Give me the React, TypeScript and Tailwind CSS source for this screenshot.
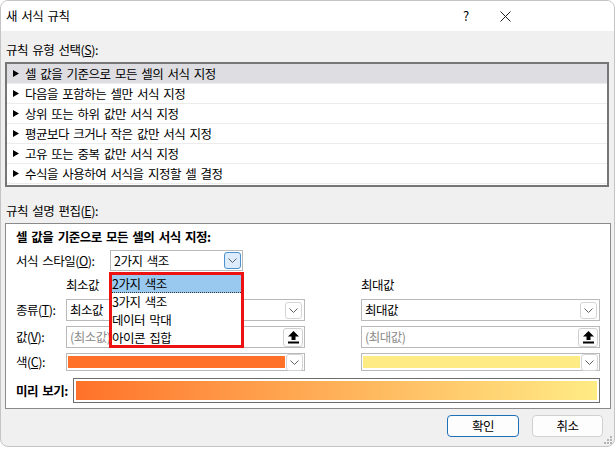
import React from 'react';

const rules = [
  '셀 값을 기준으로 모든 셀의 서식 지정',
  '다음을 포함하는 셀만 서식 지정',
  '상위 또는 하위 값만 서식 지정',
  '평균보다 크거나 작은 값만 서식 지정',
  '고유 또는 중복 값만 서식 지정',
  '수식을 사용하여 서식을 지정할 셀 결정',
];

const styles = ['2가지 색조', '3가지 색조', '데이터 막대', '아이콘 집합'];

const Chevron = () => (
  <svg width="9" height="5" viewBox="0 0 9 5" fill="none">
    <path d="M0.5 0.5 L4.5 4.5 L8.5 0.5" stroke="#606060" strokeWidth="1" />
  </svg>
);

const DropBtn = ({ active }: { active?: boolean }) => (
  <div
    className={`w-[17px] h-[17px] flex items-center justify-center rounded-[3px] border ${
      active ? 'border-[#4a90cf] bg-[#dcecfc]' : 'border-[#d4d4d4] bg-white'
    }`}
  >
    <Chevron />
  </div>
);

const UpArrow = () => (
  <svg width="11" height="13" viewBox="0 0 11 13">
    <polygon points="5.5,0 11,5.5 7.5,5.5 7.5,9 3.5,9 3.5,5.5 0,5.5" fill="#000" />
    <rect x="0" y="10.5" width="11" height="2" fill="#000" />
  </svg>
);

const Grip = () => (
  <svg width="8" height="8" viewBox="0 0 8 8">
    <rect x="6" y="0" width="2" height="2" fill="#b5b5b5" />
    <rect x="3" y="3" width="2" height="2" fill="#b5b5b5" />
    <rect x="6" y="3" width="2" height="2" fill="#b5b5b5" />
    <rect x="0" y="6" width="2" height="2" fill="#b5b5b5" />
    <rect x="3" y="6" width="2" height="2" fill="#b5b5b5" />
    <rect x="6" y="6" width="2" height="2" fill="#b5b5b5" />
  </svg>
);

export default function App() {
  return (
    <div className="w-[616px] h-[449px] bg-white overflow-hidden font-['Noto_Sans_CJK_KR','Noto_Sans',sans-serif] text-[12.5px] tracking-[-0.5px] [word-spacing:2px] text-black">
      <div className="relative w-[615px] h-[447px] rounded-[8px] border border-[#c4c4c4] bg-[#f0f0f0] flex flex-col overflow-hidden">
        {/* title bar */}
        <div className="h-[30px] shrink-0 bg-white flex items-center pl-[5px]">
          <span className="leading-[16px]">새 서식 규칙</span>
          <span className="ml-auto w-[10px] text-center text-[13px] tracking-normal">?</span>
          <svg className="ml-[29px] mr-[103px]" width="11" height="11" viewBox="0 0 11 11">
            <path d="M0.5 0.5 L10.5 10.5 M10.5 0.5 L0.5 10.5" stroke="#222" strokeWidth="1" />
          </svg>
        </div>

        <div className="px-[4px] flex flex-col">
          <div className="mt-[11px] h-[16px] leading-[16px] pl-[1px]">
            규칙 유형 선택(<u>S</u>):
          </div>

          {/* rule list */}
          <div className="mt-[4px] w-[604px] h-[125px] border-2 border-[#767676] bg-white flex flex-col">
            {rules.map((r, i) => (
              <div
                key={r}
                className={`h-[20px] shrink-0 flex items-center pl-[6px] gap-[6px] border-b border-[#ececec] ${
                  i === 0 ? 'bg-[#dedee2]' : ''
                }`}
              >
                <svg width="6" height="7" viewBox="0 0 6 7">
                  <polygon points="0,0 6,3.5 0,7" fill="#000" />
                </svg>
                <span className="leading-[16px]">{r}</span>
              </div>
            ))}
          </div>

          <div className="mt-[16px] h-[16px] leading-[16px] pl-[1px]">
            규칙 설명 편집(<u>E</u>):
          </div>

          {/* description panel */}
          <div className="relative mt-[4px] w-[606px] h-[186px] border border-[#8a8a8a] bg-white pl-[10px] pr-[9px] flex flex-col">
            <div className="mt-[5px] h-[16px] leading-[16px] font-bold">
              셀 값을 기준으로 모든 셀의 서식 지정:
            </div>

            <div className="mt-[5px] h-[21px] flex items-center">
              <div className="w-[94px] leading-[16px]">
                서식 스타일(<u>O</u>):
              </div>
              <div className="w-[133px] h-[21px] border border-[#b9b9b9] flex items-center pl-[3px] pr-[1px]">
                <span className="leading-[16px]">2가지 색조</span>
                <div className="ml-auto">
                  <DropBtn active />
                </div>
              </div>
            </div>

            <div className="flex mt-[6px] h-[16px] leading-[16px]">
              <div className="w-[50px]" />
              <div className="w-[239px]">최소값</div>
              <div className="ml-[56px] w-[239px]">최대값</div>
            </div>

            {/* type row */}
            <div className="flex mt-[6px] h-[22px]">
              <div className="w-[50px] flex items-center leading-[16px]">
                종류(<u>T</u>):
              </div>
              <div className="w-[239px] border border-[#b9b9b9] flex items-center pl-[3px] pr-[2px]">
                <span className="leading-[16px]">최소값</span>
                <div className="ml-auto">
                  <DropBtn />
                </div>
              </div>
              <div className="ml-[56px] w-[239px] border border-[#b9b9b9] flex items-center pl-[3px] pr-[2px]">
                <span className="leading-[16px]">최대값</span>
                <div className="ml-auto">
                  <DropBtn />
                </div>
              </div>
            </div>

            {/* value row */}
            <div className="flex mt-[5px] h-[22px]">
              <div className="w-[50px] flex items-center leading-[16px]">
                값(<u>V</u>):
              </div>
              <div className="w-[239px] border border-[#b9b9b9] flex items-center pl-[3px] pr-[1px]">
                <span className="leading-[16px] text-[#8c8c8c]">(최소값)</span>
                <div className="ml-auto w-[20px] h-[19px] rounded-[3px] border border-[#d0d0d0] bg-[#fdfdfd] flex items-center justify-center">
                  <UpArrow />
                </div>
              </div>
              <div className="ml-[56px] w-[239px] border border-[#b9b9b9] flex items-center pl-[3px] pr-[1px]">
                <span className="leading-[16px] text-[#8c8c8c]">(최대값)</span>
                <div className="ml-auto w-[20px] h-[19px] rounded-[3px] border border-[#d0d0d0] bg-[#fdfdfd] flex items-center justify-center">
                  <UpArrow />
                </div>
              </div>
            </div>

            {/* colour row */}
            <div className="flex mt-[5px] h-[18px]">
              <div className="w-[50px] flex items-center leading-[16px]">
                색(<u>C</u>):
              </div>
              <div className="w-[239px] border border-[#b9b9b9] flex items-center pl-[1px] pr-[1px] gap-[1px]">
                <div className="flex-1 h-[12px] bg-[#ff7128]" />
                <DropBtn />
              </div>
              <div className="ml-[56px] w-[239px] border border-[#b9b9b9] flex items-center pl-[1px] pr-[1px] gap-[1px]">
                <div className="flex-1 h-[12px] bg-[#ffeb84]" />
                <DropBtn />
              </div>
            </div>

            {/* preview */}
            <div className="mt-[7px] h-[25px] flex items-center">
              <div className="w-[57px] font-bold leading-[16px]">미리 보기:</div>
              <div className="w-[527px] h-[25px] border border-[#6e6e6e] p-[2px] bg-white">
                <div className="w-full h-full bg-gradient-to-r from-[#ff7128] to-[#ffeb84]" />
              </div>
            </div>

            {/* open style dropdown */}
            <div className="absolute left-[103px] top-[48px] w-[135px] h-[76px] border-[3px] border-[#ee1111] bg-white flex flex-col overflow-hidden">
              {styles.map((s, i) => (
                <div
                  key={s}
                  className={`h-[18px] shrink-0 flex items-center ${
                    i === 0 ? 'bg-[#99c9ef] border-b border-dotted border-[#333]' : ''
                  }`}
                >
                  <span className="leading-[16px]">{s}</span>
                </div>
              ))}
            </div>
          </div>

          {/* buttons */}
          <div className="mt-[6px] flex justify-end gap-[13px] pr-[7px]">
            <div className="w-[72px] h-[22px] rounded-[4px] border-[1.5px] border-[#1f6fb8] bg-[#fdfdfd] flex items-center justify-center leading-[16px]">
              확인
            </div>
            <div className="w-[71px] h-[22px] rounded-[4px] border border-[#d0d0d0] bg-[#fdfdfd] flex items-center justify-center leading-[16px]">
              취소
            </div>
          </div>
        </div>

        <div className="absolute right-[2px] bottom-[2px]">
          <Grip />
        </div>
      </div>
    </div>
  );
}
